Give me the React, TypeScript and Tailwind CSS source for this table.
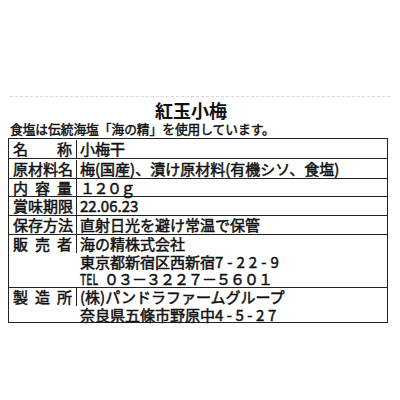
import React from "react";

const F = { fontFamily: '"Noto Sans CJK JP", "Noto Sans", sans-serif' };

function Label({ chars }: { chars: string[] }) {
  return (
    <div className="w-[68px] shrink-0 border-r border-[#222] px-[4px] flex justify-between leading-[17.5px]">
      {chars.map((c, i) => (
        <span key={i}>{c}</span>
      ))}
    </div>
  );
}

function Row({
  chars,
  h,
  first,
  children,
}: {
  chars: string[];
  h: string;
  first?: boolean;
  children: React.ReactNode;
}) {
  return (
    <div className={`flex ${first ? "" : "border-t border-[#222]"} ${h} items-start`}>
      <Label chars={chars} />
      <div className="pl-[3px] leading-[17.5px] whitespace-nowrap">{children}</div>
    </div>
  );
}

export default function App() {
  return (
    <div className="w-[400px] h-[400px] bg-white text-[#111] pt-[96px] flex flex-col" style={F}>
      <div className="mx-[10px] border-t border-dashed border-[#d8d8d8]" />
      <div className="mt-[3px] h-[20px] leading-[20px] text-[18px] font-bold flex justify-center pr-[18px]">
        紅玉小梅
      </div>
      <div className="mt-[1px] pl-[10px] h-[16px] leading-[16px] text-[12.7px] whitespace-nowrap [-webkit-text-stroke:0.45px_#111]">
        食塩は伝統海塩「海の精」を使用しています。
      </div>
      <div className="mt-[1px] ml-[8px] w-[380px] border border-[#222] text-[15px] [-webkit-text-stroke:0.5px_#111]">
        <Row chars={["名", "称"]} h="h-[19px] pt-[1px]" first>
          小梅干
        </Row>
        <Row chars={["原", "材", "料", "名"]} h="h-[20px] pt-[1px]">
          梅(国産)、漬け原材料(有機シソ、食塩)
        </Row>
        <Row chars={["内", "容", "量"]} h="h-[18px]">
          <span className="tracking-[-1.5px]">１２０ｇ</span>
        </Row>
        <Row chars={["賞", "味", "期", "限"]} h="h-[19px]">
          22.06.23
        </Row>
        <Row chars={["保", "存", "方", "法"]} h="h-[19px]">
          直射日光を避け常温で保管
        </Row>
        <Row chars={["販", "売", "者"]} h="h-[53px]">
          <div>海の精株式会社</div>
          <div>
            東京都新宿区西新宿<span className="tracking-[4px]">7-22-9</span>
          </div>
          <div className="flex">
            <span className="w-[24px] inline-block">
              <span className="inline-block origin-left scale-x-[0.7]">TEL</span>
            </span>
            <span className="tracking-[-1px]">０３－３２２７－５６０１</span>
          </div>
        </Row>
        <Row chars={["製", "造", "所"]} h="h-[35px]">
          <div>(株)パンドラファームグループ</div>
          <div>
            奈良県五條市野原中<span className="tracking-[3.5px]">4-5-27</span>
          </div>
        </Row>
      </div>
    </div>
  );
}
